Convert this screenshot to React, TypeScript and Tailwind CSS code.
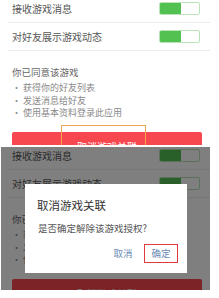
import React from 'react';

const font = { fontFamily: '"Noto Sans CJK SC", "Noto Sans", sans-serif' };

function Toggle() {
  return (
    <div className="flex h-[13px] w-[41px] overflow-hidden rounded-[2px] border border-[#b9e3b9] bg-white">
      <div className="h-full w-[21px] bg-[#52c152]" />
    </div>
  );
}

function Row({ label }: { label: string }) {
  return (
    <div className="ml-[7px] flex h-[28px] items-center justify-between border-b border-[#ececec] pl-[4px] pr-[10px]">
      <span className="text-[10px] leading-none text-[#555]">{label}</span>
      <Toggle />
    </div>
  );
}

function Screen() {
  const perms = ['获得你的好友列表', '发送消息给好友', '使用基本资料登录此应用'];
  return (
    <div className="mt-[-5px] bg-white">
      <Row label="接收游戏消息" />
      <Row label="对好友展示游戏动态" />
      <div className="pl-[11px] pt-[15px]">
        <div className="text-[9.5px] leading-[13px] text-[#666]">你已同意该游戏</div>
        <ul className="mt-[3px]">
          {perms.map((p) => (
            <li key={p} className="flex text-[9px] leading-[12.5px] text-[#8a8a8a]">
              <span className="w-[11px]">•</span>
              <span>{p}</span>
            </li>
          ))}
        </ul>
      </div>
      <button className="ml-[11px] mt-[12.5px] flex h-[29px] w-[190px] items-center justify-center rounded-[2px] bg-[#f7474f] text-[10px] text-white">
        取消游戏关联
      </button>
    </div>
  );
}

export default function App() {
  return (
    <div className="h-[298px] w-[219px] overflow-hidden bg-white" style={font}>
      <div className="relative ml-[1px] h-[145px] w-[209px] overflow-hidden">
        <Screen />
        <div className="absolute left-[60px] top-[125px] h-[40px] w-[85px] border border-[#f2a54e]" />
      </div>
      <div className="relative ml-[1px] mt-[2px] h-[143px] w-[209px] overflow-hidden">
        <Screen />
        <div className="absolute inset-0 bg-black/50" />
        <div className="absolute left-[24px] top-[37px] h-[89px] w-[162px] bg-white">
          <div className="pl-[12px] pt-[14px] text-[11.5px] leading-[14px] text-[#333]">取消游戏关联</div>
          <div className="pl-[13px] pt-[10px] text-[9.5px] leading-[13px] text-[#555]">是否确定解除该游戏授权?</div>
          <div className="mt-[9px] flex justify-end gap-[4px] pr-[9px]">
            <button className="flex h-[19px] w-[34px] items-center justify-center text-[9.5px] text-[#6b8bb3]">取消</button>
            <button className="flex h-[19px] w-[34px] items-center justify-center border-[1.5px] border-[#e0393e] text-[9.5px] text-[#6b8bb3]">确定</button>
          </div>
        </div>
      </div>
    </div>
  );
}
